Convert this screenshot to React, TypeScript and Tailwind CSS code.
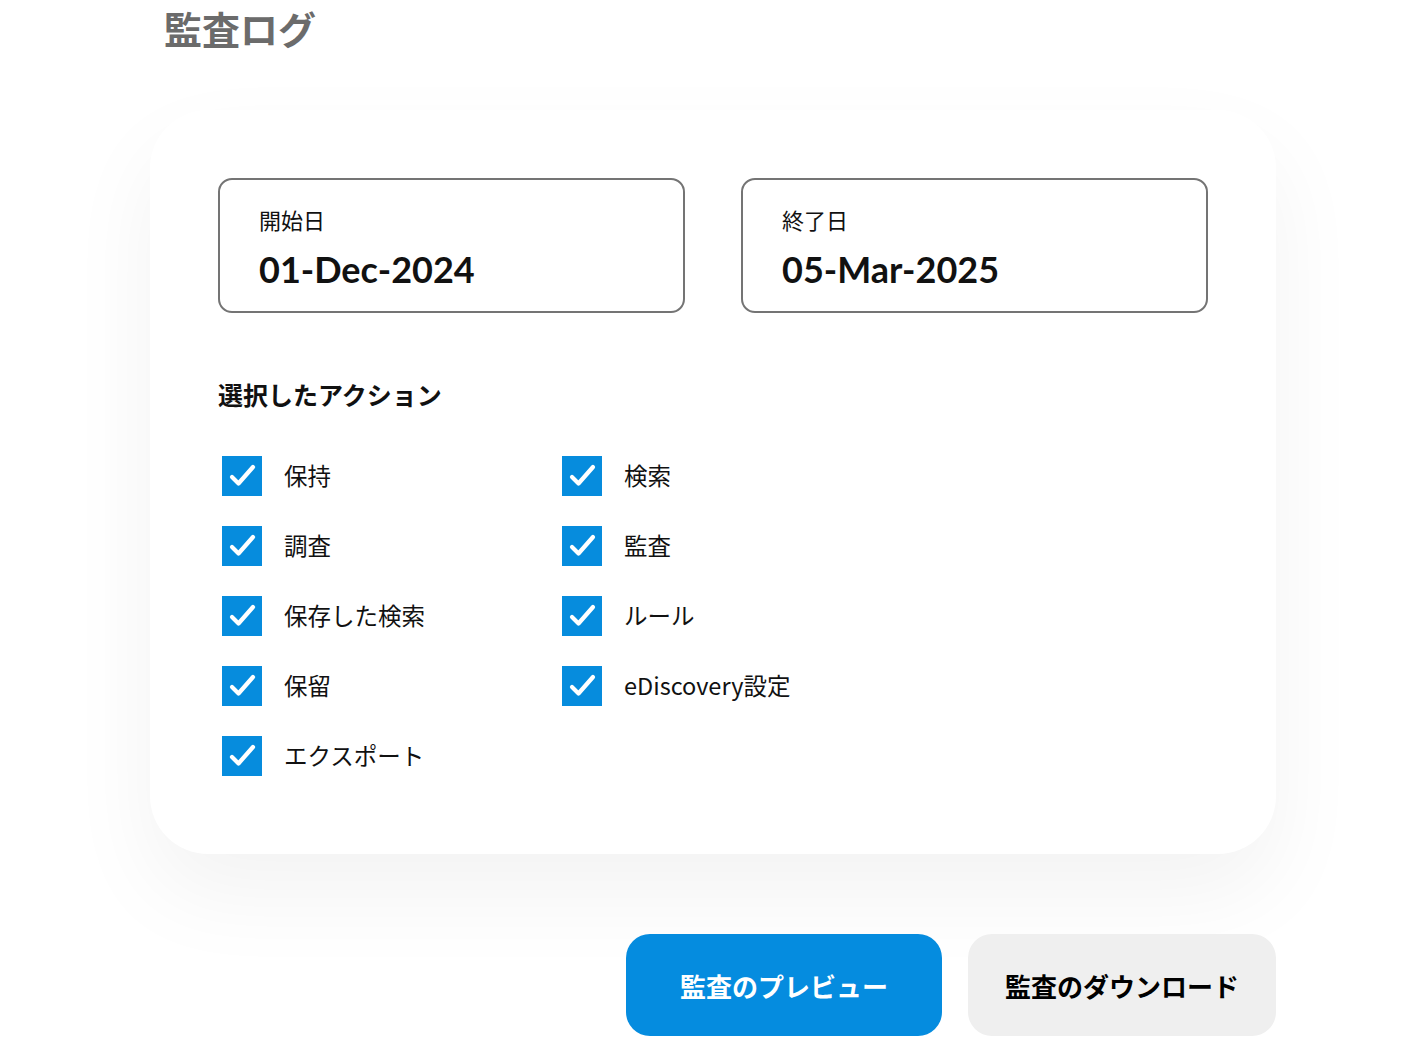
const JP = "font-['Noto_Sans_CJK_JP','Noto_Sans',sans-serif]";

const ACTIONS = [
    ["保持", "検索"],
    ["調査", "監査"],
    ["保存した検索", "ルール"],
    ["保留", "eDiscovery設定"],
    ["エクスポート", null],
];

function DateBox({ label, value }: { label: string; value: string }) {
    return (
        <div className="h-[135px] border-2 border-[#747474] rounded-[14px] pl-[39px] pt-[24px]">
            <div className={`${JP} text-[22px] leading-[30px] text-[#111]`}>{label}</div>
            <div className="font-['Lato','Liberation_Sans',sans-serif] font-bold text-[36px] leading-[44px] mt-[13px] text-[#111]">
                {value}
            </div>
        </div>
    );
}

function CheckItem({ label }: { label: string }) {
    return (
        <div className="flex items-center h-[70px]">
            <div className="w-[40px] h-[40px] ml-[4px] bg-[#068cdd]">
                <svg viewBox="0 0 40 40" className="w-[40px] h-[40px]">
                    <polyline
                        points="10,21 16.5,27.5 31,11"
                        fill="none"
                        stroke="white"
                        strokeWidth="4.2"
                        strokeLinecap="round"
                        strokeLinejoin="round"
                    />
                </svg>
            </div>
            <span className={`${JP} ml-[22px] text-[23.5px] text-[#111]`}>{label}</span>
        </div>
    );
}

export default function App() {
    return (
        <div className={`min-h-screen bg-white ${JP}`}>
            <div className="w-[1126px] ml-[150px]">
                {/* Title */}
                <h1 className="pl-[14px] pt-[2px] h-[110px] text-[38px] leading-[52px] font-bold text-[#6b6b6b]">
                    監査ログ
                </h1>

                {/* Card */}
                <div className="bg-white rounded-[58px] shadow-[0_40px_90px_rgba(0,0,0,0.05)] px-[68px] pt-[68px] pb-[63px]">
                    <div className="grid grid-cols-2 gap-[56px]">
                        <DateBox label="開始日" value="01-Dec-2024" />
                        <DateBox label="終了日" value="05-Mar-2025" />
                    </div>

                    <h2 className="mt-[64px] text-[25px] leading-[34px] font-bold text-[#111]">
                        選択したアクション
                    </h2>

                    <div className="mt-[30px] grid grid-cols-[340px_1fr]">
                        {ACTIONS.map(([a, b]) => (
                            <div key={a} className="contents">
                                <CheckItem label={a as string} />
                                {b ? <CheckItem label={b} /> : <div />}
                            </div>
                        ))}
                    </div>
                </div>

                {/* Buttons */}
                <div className="flex justify-end gap-[26px] mt-[80px]">
                    <button className="w-[316px] h-[102px] rounded-[24px] bg-[#058cdf] text-white text-[26px] font-bold">
                        監査のプレビュー
                    </button>
                    <button className="w-[308px] h-[102px] rounded-[24px] bg-[#efefef] text-black text-[26px] font-bold">
                        監査のダウンロード
                    </button>
                </div>
            </div>
        </div>
    );
}
